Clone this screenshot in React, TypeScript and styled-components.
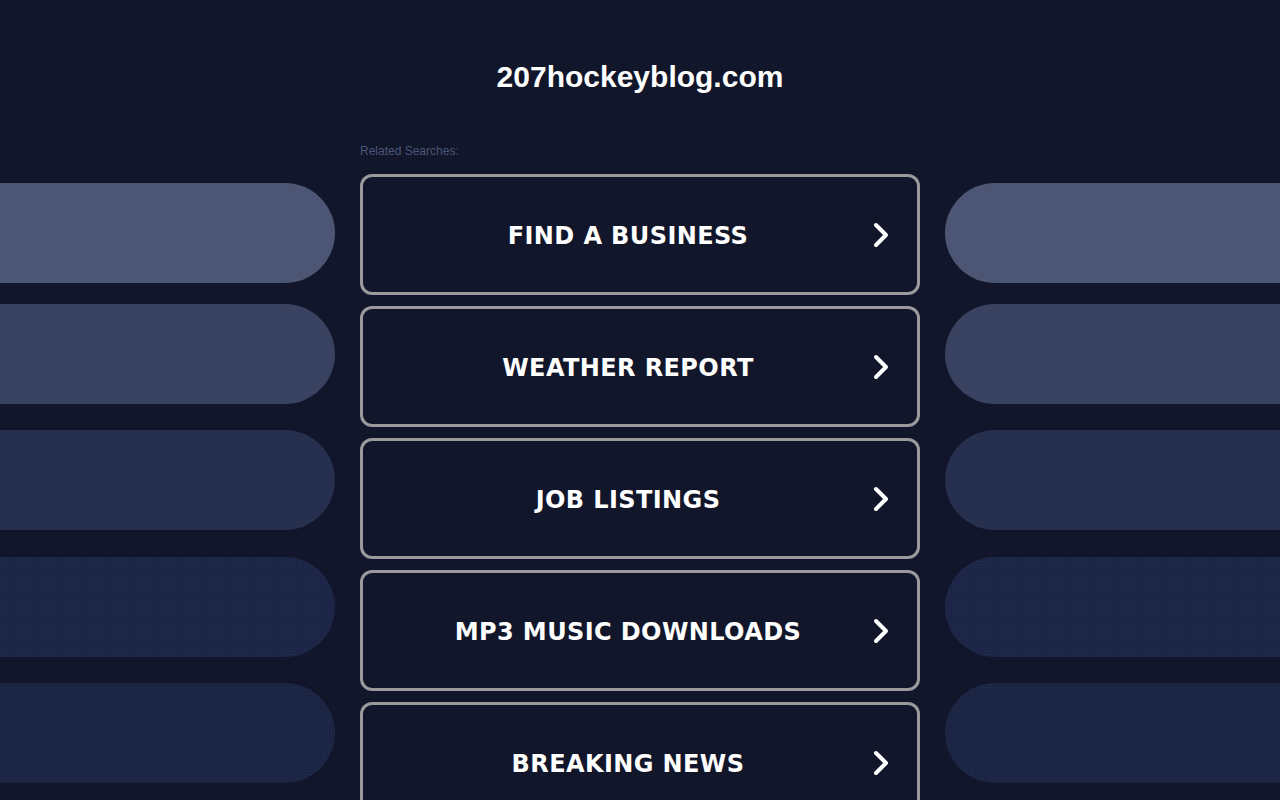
import styled, { createGlobalStyle } from 'styled-components';

const GlobalStyle = createGlobalStyle`
  html, body {
    margin: 0;
    padding: 0;
    background-color: #11162b;
    overflow: hidden;
  }
  * {
    box-sizing: border-box;
  }
`;

const Page = styled.div`
  width: 1280px;
  height: 800px;
  background-color: #11162b;
  display: flex;
  flex-direction: column;
  align-items: center;
  overflow: hidden;
`;

const Title = styled.h1`
  margin: 60px 0 0;
  height: 34px;
  font-family: 'Liberation Sans', Arial, sans-serif;
  font-size: 30px;
  font-weight: 700;
  line-height: 34px;
  color: #ffffff;
  text-align: center;
`;

const Columns = styled.div`
  width: 100%;
  display: flex;
  gap: 25px;
  margin-top: 50px;
`;

const Side = styled.div`
  width: 335px;
  flex-shrink: 0;
  display: flex;
  flex-direction: column;
  padding-top: 39px;
`;

type PillProps = {
  $shade: string;
  $gap: number;
  $dotted?: boolean;
  $side: 'left' | 'right';
};

const Pill = styled.div<PillProps>`
  height: 100px;
  flex-shrink: 0;
  margin-top: ${p => p.$gap}px;
  background-color: ${p => p.$shade};
  ${p => p.$dotted && `
    background-image: radial-gradient(rgba(60, 78, 125, 0.22) 0.6px, transparent 0.9px);
    background-size: 3px 3px;
  `}
  border-radius: ${p => (p.$side === 'left' ? '0 50px 50px 0' : '50px 0 0 50px')};
`;

const Center = styled.div`
  width: 560px;
  flex-shrink: 0;
  display: flex;
  flex-direction: column;
`;

const Label = styled.div`
  font-family: 'Liberation Sans', Arial, sans-serif;
  font-size: 12px;
  line-height: 14px;
  color: #4b5574;
  height: 14px;
  margin-bottom: 16px;
`;

const List = styled.div`
  display: flex;
  flex-direction: column;
  gap: 11px;
`;

const SearchLink = styled.a`
  height: 121px;
  border: 3px solid #9a9a9c;
  border-radius: 12px;
  background-color: #11162b;
  display: flex;
  align-items: center;
  justify-content: center;
  position: relative;
  padding: 3px 24px 0 0;
  text-decoration: none;
  flex-shrink: 0;
`;

const LinkText = styled.span`
  font-family: 'DejaVu Sans', Verdana, sans-serif;
  font-size: 24px;
  font-weight: 700;
  letter-spacing: 0.4px;
  color: #ffffff;
`;

const Chevron = styled.svg`
  position: absolute;
  right: 26px;
  top: 50%;
  margin-top: -14px;
  width: 20px;
  height: 28px;
`;

const searches = [
  'FIND A BUSINESS',
  'WEATHER REPORT',
  'JOB LISTINGS',
  'MP3 MUSIC DOWNLOADS',
  'BREAKING NEWS',
];

const pills = [
  { shade: '#4c5573', gap: 0 },
  { shade: '#3a4261', gap: 21 },
  { shade: '#272f4e', gap: 26 },
  { shade: '#1d2546', gap: 27, dotted: true },
  { shade: '#1c2443', gap: 26, dotted: true },
];

function SidePills({ side }: { side: 'left' | 'right' }) {
  return (
    <Side>
      {pills.map((p, i) => (
        <Pill key={i} $shade={p.shade} $gap={p.gap} $dotted={p.dotted} $side={side} />
      ))}
    </Side>
  );
}

export default function App() {
  return (
    <>
      <GlobalStyle />
      <Page>
        <Title>207hockeyblog.com</Title>
        <Columns>
          <SidePills side="left" />
          <Center>
            <Label>Related Searches:</Label>
            <List>
              {searches.map(s => (
                <SearchLink key={s} href="#">
                  <LinkText>{s}</LinkText>
                  <Chevron viewBox="0 0 20 28">
                    <path
                      d="M5 4 L15 14 L5 24"
                      fill="none"
                      stroke="#ffffff"
                      strokeWidth="4"
                      strokeLinecap="round"
                      strokeLinejoin="round"
                    />
                  </Chevron>
                </SearchLink>
              ))}
            </List>
          </Center>
          <SidePills side="right" />
        </Columns>
      </Page>
    </>
  );
}
